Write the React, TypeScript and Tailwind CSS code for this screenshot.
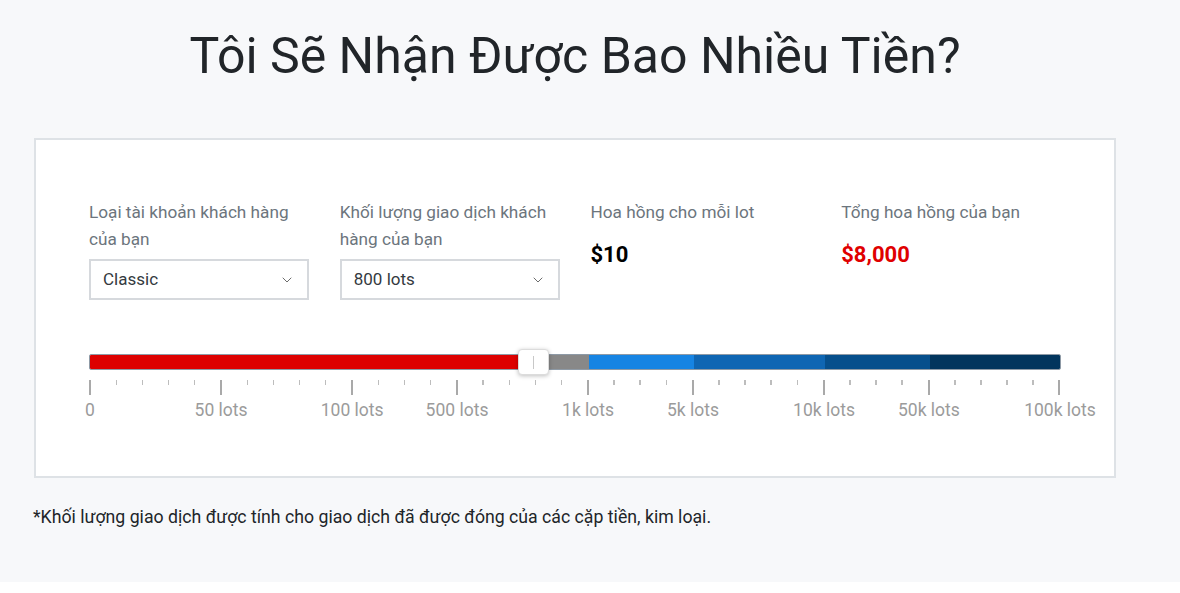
import { ChevronDown } from 'lucide-react'

const majors: { idx: number; label: string }[] = [
  { idx: 0, label: '0' },
  { idx: 5, label: '50 lots' },
  { idx: 10, label: '100 lots' },
  { idx: 14, label: '500 lots' },
  { idx: 19, label: '1k lots' },
  { idx: 23, label: '5k lots' },
  { idx: 28, label: '10k lots' },
  { idx: 32, label: '50k lots' },
  { idx: 37, label: '100k lots' },
]

const TICKS = 38

const SelectBox = ({ value }: { value: string }) => {
  return (
    <div className="flex h-[41px] w-full items-center justify-between border-2 border-[#d6d9dd] bg-white pl-[12px] pr-[12px]">
      <span className="text-[17px] text-[#343a40]">{value}</span>
      <ChevronDown className="h-[16px] w-[16px] text-[#555]" strokeWidth={1.3} />
    </div>
  )
}

const Slider = () => {
  const isMajor = (i: number) => majors.some((m) => m.idx === i)
  return (
    <div className="relative w-full">
      {/* track */}
      <div className="relative h-4">
        <div className="flex h-4 overflow-hidden rounded-[2px] border border-[#8e9aa6]">
          <div className="w-[429px] bg-[#dd0000]"></div>
          <div className="w-[70px] bg-[#888888]"></div>
          <div className="w-[105px] bg-[#1684e3]"></div>
          <div className="w-[131px] bg-[#0f66b3]"></div>
          <div className="w-[105px] bg-[#064f8c]"></div>
          <div className="flex-1 bg-[#02355d]"></div>
        </div>
        <div className="absolute left-[429px] top-[-5px] flex h-[26px] w-[31px] items-center justify-center rounded-[4px] border border-[#dcdcdc] bg-white shadow-[0_1px_4px_rgba(0,0,0,0.25)]">
          <div className="h-[13px] w-px bg-[#c8c8c8]"></div>
        </div>
      </div>
      {/* ticks */}
      <div className="mt-[10px] flex h-[15px] items-start justify-between">
        {Array.from({ length: TICKS }).map((_, i) =>
          isMajor(i) ? (
            <div key={i} className="h-[15px] w-[2px] bg-[#a9a9a9]"></div>
          ) : (
            <div key={i} className="h-[5px] w-[1.5px] bg-[#bdbdbd]"></div>
          )
        )}
      </div>
      {/* labels */}
      <div className="relative mt-[5px] h-5">
        {majors.map((m) => (
          <span
            key={m.idx}
            className="absolute top-0 -translate-x-1/2 whitespace-nowrap text-[17.5px] leading-5 text-[#9b9b9b]"
            style={{ left: `${(m.idx / (TICKS - 1)) * 970 + 1}px` }}
          >
            {m.label}
          </span>
        ))}
      </div>
    </div>
  )
}

export default function App() {
  return (
    <div className="min-h-[593px] bg-white font-['Roboto',sans-serif]">
      <div className="h-[582px] bg-[#f7f8fa]">
        <div className="ml-[34px] w-[1082px]">
          <h1 className="pt-[26px] text-center text-[50px] font-normal leading-[60px] text-[#212529]">
            Tôi Sẽ Nhận Được Bao Nhiều Tiền?
          </h1>
          <div className="mt-[52px] border-2 border-[#dee2e6] bg-white px-[53px] pb-[56px] pt-[59px]">
            <div className="grid grid-cols-4 gap-x-[31px]">
              <div>
                <p className="text-[17.2px] leading-[27px] text-[#6c757d]">Loại tài khoản khách hàng của bạn</p>
                <div className="mt-[6px]">
                  <SelectBox value="Classic" />
                </div>
              </div>
              <div>
                <p className="text-[17.2px] leading-[27px] text-[#6c757d]">Khối lượng giao dịch khách hàng của bạn</p>
                <div className="mt-[6px]">
                  <SelectBox value="800 lots" />
                </div>
              </div>
              <div>
                <p className="text-[17.2px] leading-[27px] text-[#6c757d]">Hoa hồng cho mỗi lot</p>
                <p className="mt-[14px] text-[22px] font-bold leading-[30px] text-black">$10</p>
              </div>
              <div>
                <p className="text-[17.2px] leading-[27px] text-[#6c757d]">Tổng hoa hồng của bạn</p>
                <p className="mt-[14px] text-[22px] font-bold leading-[30px] text-[#e00000]">$8,000</p>
              </div>
            </div>
            <div className="mt-[54px]">
              <Slider />
            </div>
          </div>
          <p className="ml-[-1px] mt-[28px] text-[17.7px] leading-[22px] text-[#212529]">
            *Khối lượng giao dịch được tính cho giao dịch đã được đóng của các cặp tiền, kim loại.
          </p>
        </div>
      </div>
    </div>
  )
}
